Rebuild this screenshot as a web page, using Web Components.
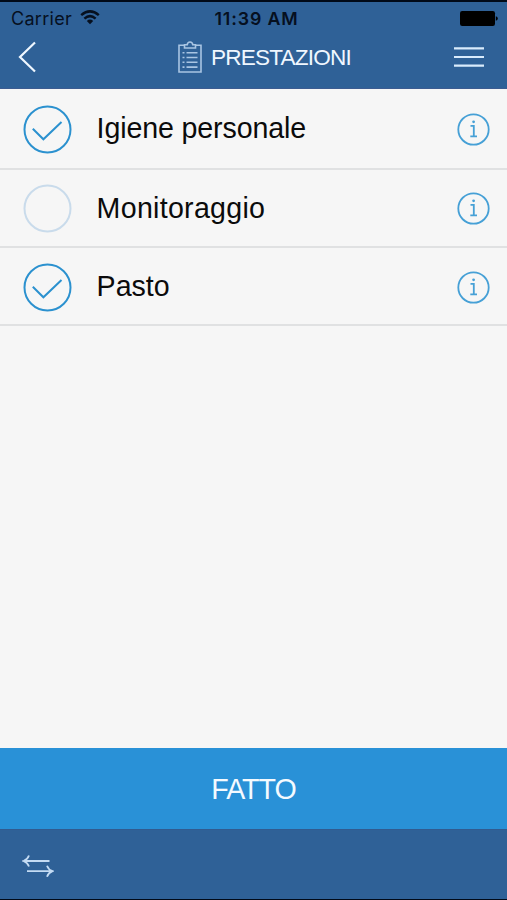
<!DOCTYPE html>
<html lang="it">
<head>
<meta charset="utf-8">
<title>Prestazioni</title>
<style>
    html, body {
        margin: 0;
        height: 100%;
        background: #000;
    }
    body {
        overflow: hidden;
        font-family: "Liberation Sans", Arial, sans-serif;
    }
</style>
</head>
<body>
<care-app>
    <status-bar slot="top" carrier="Carrier" time="11:39 AM"></status-bar>
    <nav-header slot="top">PRESTAZIONI</nav-header>
    <service-row checked style="--tracking: -0.13px">Igiene personale</service-row>
    <service-row style="--tracking: 0.28px">Monitoraggio</service-row>
    <service-row checked>Pasto</service-row>
    <done-button slot="bottom">FATTO</done-button>
    <bottom-bar slot="bottom"></bottom-bar>
</care-app>

<script>
class CareApp extends HTMLElement {
    connectedCallback() {
        this.attachShadow({ mode: 'open' });
        this.shadowRoot.innerHTML = `
            <style>
                :host {
                    display: flex;
                    flex-direction: column;
                    box-sizing: border-box;
                    height: 900px;
                    padding: 2px 0 1px;
                    background: #010a18;
                }
                header {
                    height: 87px;
                    background: #2f6197;
                    box-shadow: inset 0 -1px #3c5c91;
                }
                main {
                    flex: 1;
                    background: #f6f6f6;
                }
            </style>
            <header><slot name="top"></slot></header>
            <main><slot></slot></main>
            <slot name="bottom"></slot>
        `;
    }
}

class StatusBar extends HTMLElement {
    connectedCallback() {
        this.attachShadow({ mode: 'open' });
        this.shadowRoot.innerHTML = `
            <style>
                :host {
                    display: grid;
                    grid-template-columns: 1fr auto 1fr;
                    align-items: center;
                    box-sizing: border-box;
                    height: 32px;
                    padding: 1px 9px 0 11px;
                    color: #06101f;
                    font: 18px/31px Inter, sans-serif;
                }
                .carrier {
                    display: flex;
                    align-items: center;
                    gap: 8px;
                    letter-spacing: 0.3px;
                }
                .carrier svg { margin-top: -2px; }
                .time {
                    padding-left: 4px;
                    font-weight: 600;
                    font-size: 17.8px;
                    letter-spacing: 0.85px;
                }
                .battery {
                    justify-self: end;
                    margin-top: -1px;
                }
                svg { display: block; }
            </style>
            <div class="carrier">
                <span>${this.getAttribute('carrier')}</span>
                <svg width="20" height="15" viewBox="0 0 20 15" fill="none" stroke="#06101f" stroke-width="2.5">
                    <path d="M1.2 5.1Q10-2.3 18.8 5.1M4.4 8.6Q10 3.7 15.6 8.6"/>
                    <path d="M6.8 11Q10 8.2 13.2 11L10 14.2Z" fill="#06101f" stroke="none"/>
                </svg>
            </div>
            <span class="time">${this.getAttribute('time')}</span>
            <svg class="battery" width="38" height="15" viewBox="0 0 38 15" fill="#000">
                <rect width="35" height="15" rx="2.2"/>
                <path d="M35.8 5.2Q37.8 5.8 37.8 7.5T35.8 9.8Z"/>
            </svg>
        `;
    }
}

class NavHeader extends HTMLElement {
    connectedCallback() {
        this.attachShadow({ mode: 'open' });
        this.shadowRoot.innerHTML = `
            <style>
                :host {
                    display: grid;
                    grid-template-columns: 80px 1fr 80px;
                    align-items: center;
                    height: 46px;
                    color: #eff7ff;
                    font-size: 22.6px;
                    letter-spacing: -0.8px;
                }
                .title {
                    display: flex;
                    align-items: center;
                    justify-content: center;
                    gap: 9px;
                    padding-left: 22px;
                }
                .title span { padding-top: 1px; }
                .back { margin-left: 18px; }
                .menu { margin-left: 27px; }
                svg { display: block; fill: none; }
            </style>
            <svg class="back" width="20" height="32" viewBox="0 0 20 32" stroke="#eff7ff" stroke-width="2.2">
                <path d="M17 1.5 2 16 17 30.5"/>
            </svg>
            <div class="title">
                <svg width="24" height="32" viewBox="0 0 24 32" stroke="#a9c5e3" stroke-width="1.6">
                    <path d="M6.5 4.3H1V31H23V4.3H17.5"/>
                    <path d="M6.5 7V3.8H9.2Q9.5 1 12 1T14.8 3.8H17.5V7Z"/>
                    <path d="M4.5 11.7H6.5M8.5 11.7H19.5M4.5 16.5H6.5M8.5 16.5H19.5M4.5 21.3H6.5M8.5 21.3H19.5M4.5 26.1H6.5M8.5 26.1H19.5"/>
                </svg>
                <span><slot></slot></span>
            </div>
            <svg class="menu" width="30" height="24" viewBox="0 0 30 24" stroke="#d9ebfc" stroke-width="2.2">
                <path d="M0 3.3H30M0 12H30M0 20.7H30"/>
            </svg>
        `;
    }
}

class ServiceRow extends HTMLElement {
    connectedCallback() {
        const checked = this.hasAttribute('checked');
        this.attachShadow({ mode: 'open' });
        this.shadowRoot.innerHTML = `
            <style>
                :host {
                    display: flex;
                    align-items: center;
                    box-sizing: border-box;
                    height: 78.7px;
                    padding: 2px 17px 0 23px;
                    border-bottom: 2px solid #e0e1e2;
                    color: #0b0b0b;
                    font-size: 28.6px;
                    letter-spacing: var(--tracking, 0);
                }
                :host(:first-of-type) { height: 80.5px; }
                :host(:last-of-type) { height: 77.8px; }
                .label {
                    flex: 1;
                    margin: -1px 0 0 24.6px;
                }
                svg { display: block; fill: none; }
            </style>
            <svg width="49" height="49" viewBox="0 0 49 49" stroke="${checked ? '#2b91cf' : '#c9dbeb'}" stroke-width="2">
                <circle cx="24.5" cy="24.5" r="23"/>
                ${checked ? '<path d="M9.8 23.8 20.4 34.3 38.5 17"/>' : ''}
            </svg>
            <span class="label"><slot></slot></span>
            <svg width="33" height="33" viewBox="0 0 33 33" stroke="#46a0d6" stroke-width="1.8">
                <circle cx="16.5" cy="16.5" r="15.2"/>
                <path d="M13.5 12.8H16.8V23.3M13.3 23.3H20" stroke-width="1.8"/>
                <circle cx="16.6" cy="8.8" r="1.4" fill="#46a0d6" stroke="none"/>
            </svg>
        `;
    }
}

class DoneButton extends HTMLElement {
    connectedCallback() {
        this.attachShadow({ mode: 'open' });
        this.shadowRoot.innerHTML = `
            <style>
                :host {
                    display: block;
                }
                button {
                    display: block;
                    width: 100%;
                    height: 81px;
                    margin: 0;
                    padding: 2px 0 0;
                    border: 0;
                    background: #2991d7;
                    color: #f4faff;
                    font: inherit;
                    font-size: 28.6px;
                    letter-spacing: -1px;
                }
            </style>
            <button><slot></slot></button>
        `;
    }
}

class BottomBar extends HTMLElement {
    connectedCallback() {
        this.attachShadow({ mode: 'open' });
        this.shadowRoot.innerHTML = `
            <style>
                :host {
                    display: flex;
                    align-items: center;
                    box-sizing: border-box;
                    height: 70px;
                    padding: 3px 22px 0;
                    background: #2f6197;
                    box-shadow: inset 0 1px #315b90;
                }
                svg { display: block; fill: none; }
            </style>
            <svg width="32" height="24" viewBox="0 0 32 24" stroke="#c4dbf3" stroke-width="1.8">
                <path d="M27.5 7H1.5M7 1.5Q5.5 5.5 1.5 7Q5.5 8.5 7 12.5M5 17.2H30.5M25 11.7Q26.5 15.7 30.5 17.2Q26.5 18.7 25 22.7"/>
            </svg>
        `;
    }
}

customElements.define('care-app', CareApp);
customElements.define('status-bar', StatusBar);
customElements.define('nav-header', NavHeader);
customElements.define('service-row', ServiceRow);
customElements.define('done-button', DoneButton);
customElements.define('bottom-bar', BottomBar);
</script>
</body>
</html>
